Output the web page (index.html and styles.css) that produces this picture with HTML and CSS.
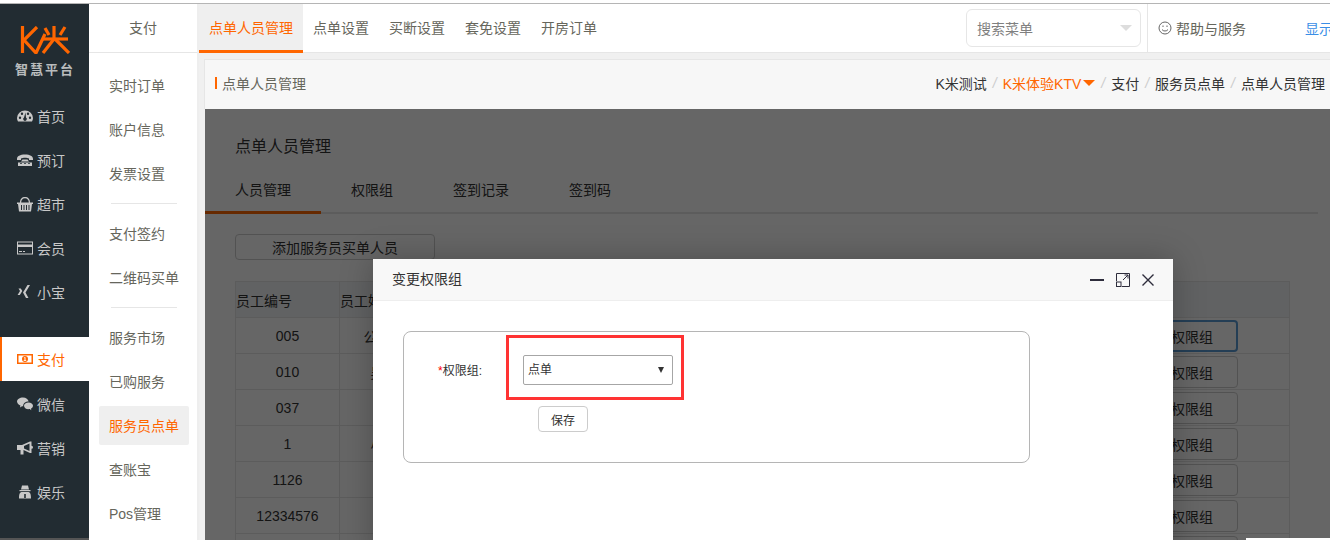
FILE: index.html
```html
<!DOCTYPE html>
<html lang="zh-CN">
<head>
    <meta charset="UTF-8">
    <title>点单人员管理</title>
    <link rel="stylesheet" href="styles.css">
</head>
<body>

<div class="shell">
    <div class="side">
        <div class="logo">
            <svg class="logoMark" viewBox="0 0 50 28" width="50" height="28">
                <g fill="none" stroke="#ff6600" stroke-width="3.2">
                    <path d="M2.500 0V27"/>
                    <path d="M17 1 4 14 16 27 25 8"/>
                    <path d="M23 13H48"/>
                    <path d="M34 0V14"/>
                    <path d="M34 13 23 27"/>
                    <path d="M35 13 49 27"/>
                    <path d="M25 2 29 9"/>
                    <path d="M45 1 40 9"/>
                </g>
            </svg>
            <div class="logoText">智慧平台</div>
        </div>
        <a class="sideItem">
            <svg class="sideIcon" viewBox="0 0 16 16"><path fill-rule="evenodd" d="M1 13.500C.3 12.500 0 11.200 0 10a8 7.500 0 0 1 16 0c0 1.200-.3 2.500-1 3.500zM3 8.500a1.200 1.200 0 1 0 0 2.400 1.200 1.200 0 0 0 0-2.400zM5 4.500a1.200 1.200 0 1 0 0 2.400 1.200 1.200 0 0 0 0-2.400zM11 4.500a1.200 1.200 0 1 0 0 2.400 1.200 1.200 0 0 0 0-2.400zM13 8.500a1.200 1.200 0 1 0 0 2.400 1.200 1.200 0 0 0 0-2.400zM8.500 4.500 7 9.500a1.800 1.800 0 1 0 2 0z"/></svg>
            <span>首页</span>
        </a>
        <a class="sideItem">
            <svg class="sideIcon" viewBox="0 0 16 16"><path fill-rule="evenodd" d="M0 7C0 4 3 2.500 8 2.500S16 4 16 7v1h-4V6.500C11 6 9.500 5.800 8 5.800S5 6 4 6.500V8H0zM4 9.500l1.500-2h5l1.500 2zM1 10.500h14V14H1zM3 11.300v.8h2v-.8zM7 11.300v.8h2v-.8zM11 11.300v.8h2v-.8z"/></svg>
            <span>预订</span>
        </a>
        <a class="sideItem">
            <svg class="sideIcon" viewBox="0 0 16 16"><path fill-rule="evenodd" d="M3 6.500C3 3 5 1 8 1s5 2 5 5.500h-1.200C11.800 4 10.300 2.200 8 2.200S4.200 4 4.200 6.500zM0 6.500h16V8h-1l-1 7.500H2L1 8H0zM4 9v5h1V9zM6.500 9v5h1V9zM9 9v5h1V9zM11.500 9v5h1V9z"/></svg>
            <span>超市</span>
        </a>
        <a class="sideItem">
            <svg class="sideIcon" viewBox="0 0 16 16"><path fill-rule="evenodd" d="M0 1.500h16v13H0zM1 2.500v2h14v-2zM1 7v6.500h14V7zM2 11h3v1H2zM6 11h2v1H6z"/></svg>
            <span>会员</span>
        </a>
        <a class="sideItem">
            <svg class="sideIcon" viewBox="0 0 16 16"><path d="M10.500 1H13L8.500 8.500 11.500 14H9L6 8.500zM1.500 4.500h2.300L5.300 7 2.800 11H.6l2.400-4z"/></svg>
            <span>小宝</span>
        </a>
        <a class="sideItem sideActive">
            <svg class="sideIcon" viewBox="0 0 16 16"><path fill-rule="evenodd" d="M0 3h16v10H0zM1.500 4.500v7h13v-7zM8 5a3 3 0 1 1 0 6 3 3 0 0 1 0-6zM8.500 6.200H7.300L6.800 7h.7v2.200h-.8V10h2.500v-.8h-.7z"/></svg>
            <span>支付</span>
        </a>
        <a class="sideItem">
            <svg class="sideIcon" viewBox="0 0 16 16"><path d="M6 1.500c3 0 5.300 1.800 5.600 4C8.500 5.500 6 7.500 6.200 10.200H5L3 11.500l.4-2C1.300 8.500 0 7 0 5.500 0 3.200 2.700 1.500 6 1.500z"/><path d="M11.500 6.500c2.500 0 4.500 1.500 4.500 3.300 0 1.200-.8 2.200-2 2.900l.3 1.600-1.600-1.200c-3.200.6-5.700-1.200-5.700-3.300 0-1.800 2-3.300 4.500-3.300z"/></svg>
            <span>微信</span>
        </a>
        <a class="sideItem">
            <svg class="sideIcon" viewBox="0 0 16 16"><path fill-rule="evenodd" d="M0 5h5l8-3.500h1.500v4.200a1.500 1.500 0 0 1 0 3v4.300H13L6.500 10v4.500H3.500V10H0zM12.500 3.500 7 6v2.500l5.500 2.500z"/></svg>
            <span>营销</span>
        </a>
        <a class="sideItem">
            <svg class="sideIcon" viewBox="0 0 16 16"><path d="M5 1.500h6l1 4H4z"/><path d="M2.500 6h11v1.200h-11z"/><path d="M4.500 8h7c2 .8 2.500 2.500 2.500 6.500H2C2 10.500 2.500 8.800 4.500 8zM7.200 10v4h1.600v-4z"/></svg>
            <span>娱乐</span>
        </a>
    </div>

    <div class="subNav">
        <div class="subHead">支付</div>
        <a class="subItem">实时订单</a>
        <a class="subItem">账户信息</a>
        <a class="subItem">发票设置</a>
        <div class="subLine"></div>
        <a class="subItem">支付签约</a>
        <a class="subItem">二维码买单</a>
        <div class="subLine"></div>
        <a class="subItem">服务市场</a>
        <a class="subItem">已购服务</a>
        <a class="subItem subActive">服务员点单</a>
        <a class="subItem">查账宝</a>
        <a class="subItem">Pos管理</a>
    </div>

    <div class="main">
        <div class="topBar">
            <a class="topTab topActive">点单人员管理</a>
            <a class="topTab">点单设置</a>
            <a class="topTab">买断设置</a>
            <a class="topTab">套免设置</a>
            <a class="topTab">开房订单</a>
            <div class="topTools">
                <div class="searchBox">
                    <span>搜索菜单</span>
                    <i class="searchArrow"></i>
                </div>
                <div class="helpBox">
                    <svg class="smile" viewBox="0 0 14 14" width="14" height="14">
                        <g fill="none" stroke="#666" stroke-width="1">
                            <circle cx="7" cy="7" r="6"/>
                            <path d="M4 8.500C5 10.500 9 10.500 10 8.500"/>
                            <path d="M5 4.500V6M9 4.500V6"/>
                        </g>
                    </svg>
                    <span>帮助与服务</span>
                    <a class="showAll">显示全部</a>
                </div>
            </div>
        </div>

        <div class="crumbBar">
            <div class="crumbTitle">点单人员管理</div>
            <div class="crumbs">
                <span>K米测试</span><i>/</i>
                <span class="crumbShop">K米体验KTV<b class="crumbArrow"></b></span><i>/</i>
                <span>支付</span><i>/</i>
                <span>服务员点单</span><i>/</i>
                <span>点单人员管理</span>
            </div>
        </div>

        <div class="content">
            <h1 class="pageTitle">点单人员管理</h1>
            <div class="tabs">
                <a class="tab tabActive">人员管理</a>
                <a class="tab">权限组</a>
                <a class="tab">签到记录</a>
                <a class="tab">签到码</a>
            </div>
            <button class="addButton">添加服务员买单人员</button>
            <table class="staffTable">
                <thead>
                    <tr><th class="colNo">员工编号</th><th class="colName">员工姓名</th><th></th><th class="colOp"></th></tr>
                </thead>
                <tbody>
                    <tr><td>005</td><td>公司前台</td><td></td><td class="colOp"><button class="opButton opFocus">变更权限组</button></td></tr>
                    <tr><td>010</td><td>吴小明</td><td></td><td class="colOp"><button class="opButton">变更权限组</button></td></tr>
                    <tr><td>037</td><td>李明</td><td></td><td class="colOp"><button class="opButton">变更权限组</button></td></tr>
                    <tr><td>1</td><td>小一号</td><td></td><td class="colOp"><button class="opButton">变更权限组</button></td></tr>
                    <tr><td>1126</td><td>张三</td><td></td><td class="colOp"><button class="opButton">变更权限组</button></td></tr>
                    <tr><td>12334576</td><td>王五</td><td></td><td class="colOp"><button class="opButton">变更权限组</button></td></tr>
                    <tr><td></td><td></td><td></td><td class="colOp"><button class="opButton"></button></td></tr>
                </tbody>
            </table>

            <div class="mask"></div>
            <div class="bottomChip"></div>

            <div class="dialog">
                <div class="dialogHead">
                    <span>变更权限组</span>
                    <div class="dialogIcons">
                        <svg viewBox="0 0 14 14" width="14" height="14"><path d="M0 7H14" stroke="#2e2d3c" stroke-width="2"/></svg>
                        <svg viewBox="0 0 14 14" width="14" height="14"><g fill="none" stroke="#2e2d3c" stroke-width="1"><path d="M.5 8V.5H13.500V13.500H6"/><rect x=".5" y="9" width="4.500" height="4.500"/><path d="M7 7 12 2M8.500 2H12V5.500"/></g></svg>
                        <svg viewBox="0 0 14 14" width="14" height="14"><path d="M.5 1.500 11.500 12.500M11.500 1.500 .5 12.500" stroke="#2e2d3c" stroke-width="1.400"/></svg>
                    </div>
                </div>
                <div class="dialogBody">
                    <div class="formBox">
                        <div class="formRow">
                            <label class="formLabel"><em>*</em>权限组:</label>
                            <div class="selectWrap">
                                <select class="groupSelect">
                                    <option>点单</option>
                                </select>
                            </div>
                        </div>
                        <button class="saveButton">保存</button>
                        <div class="redMark"></div>
                    </div>
                </div>
            </div>
        </div>
    </div>
</div>

</body>
</html>
```

FILE: styles.css
```css
* {
    box-sizing: border-box;
}

html, body {
    height: 540px;
    overflow: hidden;
}

body {
    margin: 0;
    padding-top: 3px;
    background: #fff;
    font-family: "Liberation Sans", "Noto Sans CJK SC", sans-serif;
    font-size: 14px;
    color: #66665c;
}

button, select {
    font-family: inherit;
}

.shell {
    display: flex;
    height: 537px;
    border-top: 1px solid #b5b5b5;
}

/* dark left column */
.side {
    width: 89px;
    flex-shrink: 0;
    background: #222c32;
    color: #c8c8c8;
    border-bottom: 2px solid #555;
}

.logo {
    height: 90px;
    padding: 22px 0 0 20px;
}

.logoMark {
    display: block;
}

.logoText {
    margin: 7px 0 0 -5px;
    font-size: 13px;
    font-weight: bold;
    line-height: 18px;
    letter-spacing: 2px;
    color: #b9bcbd;
    white-space: nowrap;
}

.sideItem {
    display: flex;
    align-items: center;
    gap: 4px;
    height: 44px;
    padding-left: 17px;
}

.sideIcon {
    width: 16px;
    height: 16px;
    fill: currentColor;
}

.sideActive {
    margin: 23px 0 1px;
    padding-left: 15px;
    background: #fff;
    border-left: 2px solid #ff6600;
    color: #ff6600;
}

/* second column */
.subNav {
    width: 110px;
    flex-shrink: 0;
    border-right: 2px solid #eee;
    background: #fff;
}

.subHead {
    height: 49px;
    margin-bottom: 11px;
    border-bottom: 1px solid #e6e6e6;
    line-height: 48px;
    text-align: center;
}

.subItem {
    display: block;
    height: 44px;
    line-height: 44px;
    padding-left: 20px;
    white-space: nowrap;
}

.subLine {
    height: 1px;
    margin: 7px 20px 8px 22px;
    background: #e6e6e6;
}

.subActive {
    position: relative;
    z-index: 0;
    color: #ff6600;
}

.subActive::before {
    content: "";
    position: absolute;
    z-index: -1;
    top: 2px;
    left: 10px;
    width: 90px;
    height: 39px;
    border-radius: 2px;
    background: #efefef;
}

/* top tabs and breadcrumb */
.main {
    flex: 1;
    min-width: 0;
    display: flex;
    flex-direction: column;
    background: #f0f0f0;
}

.topBar {
    display: flex;
    height: 49px;
    flex-shrink: 0;
    background: #fff;
    border-bottom: 1px solid #e6e6e6;
}

.topTab {
    padding: 0 10px;
    line-height: 48px;
    white-space: nowrap;
}

.topActive {
    height: 49px;
    background: #efefef;
    border-bottom: 3px solid #ff6600;
    color: #ff6600;
}

.topTools {
    display: flex;
    align-items: stretch;
    width: 364px;
    flex-shrink: 0;
    margin-left: auto;
    overflow: hidden;
}

.searchBox {
    display: flex;
    align-items: center;
    justify-content: space-between;
    width: 175px;
    height: 38px;
    flex-shrink: 0;
    margin-top: 5px;
    padding: 0 8px 0 10px;
    border: 1px solid #e6e6e6;
    border-radius: 6px;
    color: #808080;
}

.searchArrow {
    width: 0;
    height: 0;
    border-left: 6px solid transparent;
    border-right: 6px solid transparent;
    border-top: 6px solid #ddd;
}

.helpBox {
    display: flex;
    align-items: center;
    flex-shrink: 0;
    margin-left: 6px;
    padding-left: 10px;
    border-left: 1px solid #e6e6e6;
    white-space: nowrap;
}

.smile {
    margin-right: 4px;
}

.showAll {
    margin-left: 59px;
    color: #3a8ee6;
}

.crumbBar {
    display: flex;
    align-items: center;
    justify-content: space-between;
    flex-shrink: 0;
    height: 50px;
    margin: 6px 0 0 5px;
    padding: 0 5px 3px 10px;
    background: #f7f7f7;
    border-top: 1px solid #e6e6e6;
    border-left: 1px solid #e6e6e6;
}

.crumbTitle {
    padding-left: 7px;
    background: linear-gradient(#ff6600, #ff6600) no-repeat 0 center / 2px 12px;
}

.crumbs {
    display: flex;
    align-items: center;
    color: #333;
    white-space: nowrap;
}

.crumbs i {
    margin: 0 6px;
    color: #ccc;
}

.crumbShop {
    display: flex;
    align-items: center;
    color: #ff6600;
}

.crumbArrow {
    width: 0;
    height: 0;
    margin-left: 2px;
    border-left: 6px solid transparent;
    border-right: 6px solid transparent;
    border-top: 6px solid #ff6600;
}

/* page under the dialog */
.content {
    position: relative;
    flex: 1;
    margin-left: 6px;
    overflow: hidden;
    background: #fff;
    color: #333;
}

.pageTitle {
    margin: 0;
    padding: 27px 0 0 30px;
    font-size: 16px;
    font-weight: normal;
    line-height: 22px;
}

.tabs {
    display: flex;
    height: 45px;
    margin: 11px 12px 0 0;
    border-bottom: 2px solid #e6e6e6;
}

.tab {
    height: 45px;
    padding: 0 30px;
    line-height: 43px;
}

.tabActive {
    border-bottom: 3px solid #ff6600;
}

.addButton {
    display: block;
    width: 200px;
    height: 26px;
    margin: 20px 0 0 30px;
    padding: 0;
    border: 1px solid #ccc;
    border-radius: 4px;
    background: #fff;
    font-size: 14px;
    color: #333;
}

.staffTable {
    width: 1055px;
    margin: 21px 0 0 30px;
    border-collapse: collapse;
    table-layout: fixed;
}

.staffTable th,
.staffTable td {
    height: 36px;
    padding: 0;
    border: 1px solid #e6e6e6;
    font-weight: normal;
    text-align: center;
    white-space: nowrap;
}

.staffTable th {
    background: #f3f5f7;
    text-align: left;
}

.colNo {
    width: 104px;
}

.colName {
    width: 104px;
}

.staffTable .colOp {
    width: 320px;
    padding-right: 51px;
    text-align: right;
}

.opButton {
    display: block;
    width: 120px;
    height: 32px;
    margin-left: auto;
    padding: 0;
    border: 1px solid #ccc;
    border-radius: 4px;
    background: #fff;
    font-size: 14px;
    color: #333;
}

.opFocus {
    border: 2px solid #5b9bd5;
}

.mask {
    position: absolute;
    top: 0;
    right: 0;
    bottom: 0;
    left: 0;
    background: rgba(0, 0, 0, .6);
}

.bottomChip {
    position: absolute;
    right: 0;
    bottom: 0;
    width: 84px;
    height: 2px;
    background: #fff;
}

/* dialog */
.dialog {
    position: absolute;
    top: 150px;
    left: 168px;
    width: 800px;
    height: 300px;
    background: #fff;
    box-shadow: 0 0 30px rgba(0, 0, 0, .25);
}

.dialogHead {
    display: flex;
    align-items: center;
    justify-content: space-between;
    height: 42px;
    padding: 0 17px 3px 19px;
    background: #f8f8f8;
    border-bottom: 1px solid #eee;
}

.dialogIcons {
    display: flex;
    gap: 12px;
    margin-top: 3px;
}

.dialogBody {
    padding: 30px;
}

.formBox {
    position: relative;
    width: 627px;
    height: 132px;
    padding-top: 23px;
    border: 1px solid #b5b5b5;
    border-radius: 8px;
    font-size: 12px;
}

.formRow {
    display: flex;
    align-items: center;
}

.formLabel {
    width: 78px;
    margin-top: -2px;
    text-align: right;
    white-space: nowrap;
}

.formLabel em {
    color: #f00;
    font-style: normal;
}

.selectWrap {
    position: relative;
    width: 150px;
    margin-left: 41px;
}

.selectWrap::after {
    content: "";
    position: absolute;
    top: 12px;
    right: 9px;
    border-left: 3px solid transparent;
    border-right: 3px solid transparent;
    border-top: 6px solid #333;
}

.groupSelect {
    display: block;
    width: 100%;
    height: 30px;
    padding: 0 4px;
    border: 1px solid #a6a6a6;
    border-radius: 2px;
    background: #fff;
    font-size: 12px;
    color: #333;
    appearance: none;
}

.saveButton {
    display: block;
    width: 50px;
    height: 26px;
    margin: 21px 0 0 134px;
    padding: 0;
    border: 1px solid #ccc;
    border-radius: 4px;
    background: #fff;
    font-size: 12px;
    color: #333;
}

.redMark {
    position: absolute;
    top: 3px;
    left: 102px;
    width: 178px;
    height: 65px;
    border: 3px solid #f33;
}
```
